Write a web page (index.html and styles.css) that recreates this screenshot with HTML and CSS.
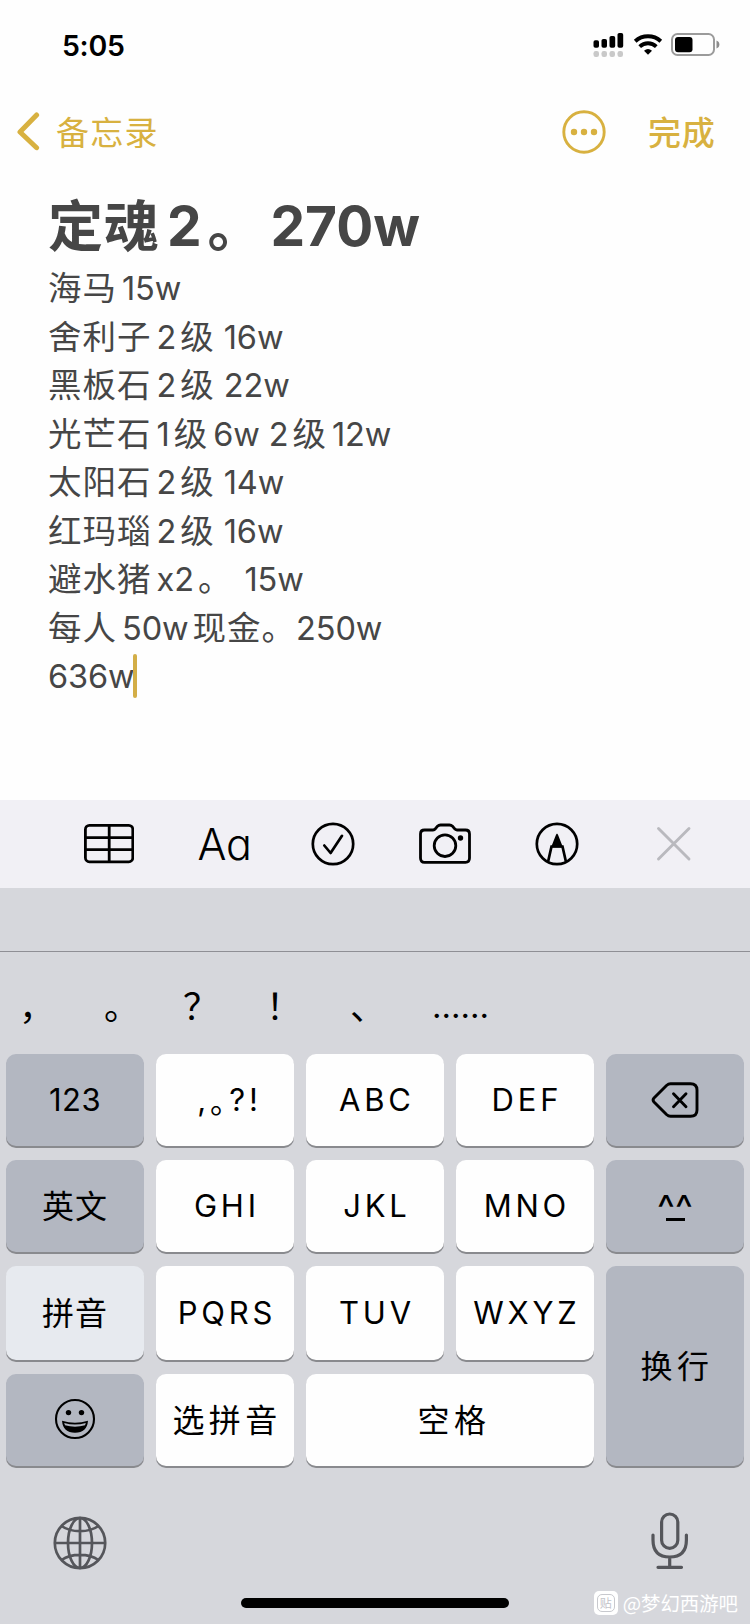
FILE: index.html
```html
<!DOCTYPE html>
<html lang="zh-CN">
<head>
<meta charset="utf-8">
<title>备忘录</title>
<link rel="stylesheet" href="styles.css">
</head>
<body>
<div class="phone">
  <header class="status">
    <span class="time">5:05</span>
    <svg class="status-icons" width="128" height="26" viewBox="0 0 128 26">
      <g fill="#000"><rect x="0.5" y="8.3" width="5.5" height="7.5" rx="1.8"/><rect x="8.5" y="7" width="5.5" height="8.8" rx="1.8"/><rect x="16.5" y="4" width="5.7" height="11.8" rx="1.8"/><rect x="24.5" y="1" width="5.7" height="14.8" rx="1.8"/></g>
      <g fill="#c9c9c9"><rect x="0.5" y="19" width="5.5" height="6" rx="2.2"/><rect x="8.5" y="19" width="5.5" height="6" rx="2.2"/><rect x="16.5" y="19" width="5.5" height="6" rx="2.2"/><rect x="24.5" y="19" width="5.5" height="6" rx="2.2"/></g>
      <path d="M42.2 9.2A19.2 19.2 0 0 1 67.8 9.2" fill="none" stroke="#000" stroke-width="4"/>
      <path d="M46.7 14.6A12 12 0 0 1 63.3 14.6" fill="none" stroke="#000" stroke-width="3.8"/>
      <path d="M51 18.7Q55 15.4 59 18.7L55 22.8Z"/>
      <rect x="79" y="2" width="42" height="21" rx="5.5" fill="none" stroke="#9b9b9b" stroke-width="2"/>
      <rect x="82" y="5" width="17.5" height="15.3" rx="3"/>
      <path d="M123.5 8.5Q126.4 9.6 126.4 12.5T123.5 16.5Z" fill="#8d8d8d"/>
    </svg>
  </header>
  <nav class="nav">
    <svg class="back" width="24" height="40" viewBox="0 0 24 40"><path d="M19.6 3L3 20L19.6 35.7" fill="none" stroke="#d8b140" stroke-width="5" stroke-linecap="round" stroke-linejoin="round"/></svg>
    <span class="nav-title">备忘录</span>
    <svg class="more" width="44" height="44" viewBox="0 0 44 44"><circle cx="22" cy="22" r="20.2" fill="none" stroke="#d8b140" stroke-width="2.9"/><g fill="#d8b140"><circle cx="12" cy="22" r="3.2"/><circle cx="22" cy="22" r="3.2"/><circle cx="32" cy="22" r="3.2"/></g></svg>
    <span class="done">完成</span>
  </nav>
  <main class="note">
    <h1><span class="han">定魂</span><span class="num">2</span><span class="han stop">。</span><span class="num">270w</span></h1>
    <p><span class="han">海马</span><span class="num">15w</span></p>
    <p><span class="han">舍利子</span><span class="num">2</span><span class="han">级</span><span class="num sp">16w</span></p>
    <p><span class="han">黑板石</span><span class="num">2</span><span class="han">级</span><span class="num sp">22w</span></p>
    <p><span class="han">光芒石</span><span class="num">1</span><span class="han">级</span><span class="num">6w</span><span class="num sp">2</span><span class="han">级</span><span class="num">12w</span></p>
    <p><span class="han">太阳石</span><span class="num">2</span><span class="han">级</span><span class="num sp">14w</span></p>
    <p><span class="han">红玛瑙</span><span class="num">2</span><span class="han">级</span><span class="num sp">16w</span></p>
    <p><span class="han">避水猪</span><span class="num">x2</span><span class="han stop">。</span><span class="num wide">15w</span></p>
    <p><span class="han">每人</span><span class="num">50w</span><span class="han">现金。</span><span class="num tight">250w</span></p>
    <p><span class="num">636w</span><i class="caret"></i></p>
  </main>
  <div class="toolbar">
    <svg width="50" height="40" viewBox="0 0 50 40" fill="none" stroke="#000" stroke-width="2.8"><rect x="1.4" y="1.4" width="47.4" height="36.4" rx="4"/><path d="M25.2 1.4V37.8M1.4 13.6H48.8M1.4 25.6H48.8"/></svg>
    <span class="aa">Aa</span>
    <svg width="44" height="44" viewBox="0 0 44 44" fill="none" stroke="#000" stroke-width="2.7" stroke-linecap="round" stroke-linejoin="round"><circle cx="22" cy="22" r="20.2"/><path d="M13.3 23.5L19.6 31L31 13.8"/></svg>
    <svg width="52" height="42" viewBox="0 0 52 42" fill="none" stroke="#000" stroke-width="2.8" stroke-linejoin="round"><path d="M5.5 7H14Q15.5 7 16.5 5.7L18.5 3.2Q19.7 2 21.5 2H30.5Q32.3 2 33.5 3.2L35.5 5.7Q36.5 7 38 7H46.5Q50.5 7 50.5 11V35Q50.5 39.3 46.5 39.3H5.5Q1.5 39.3 1.5 35V11Q1.5 7 5.5 7Z"/><circle cx="26" cy="22.7" r="10.8"/><circle cx="41.5" cy="15" r="2.7" fill="#000" stroke="none"/></svg>
    <svg width="44" height="44" viewBox="0 0 44 44" fill="none" stroke="#000" stroke-width="2.7"><circle cx="22" cy="22" r="20.2"/><path d="M13 40L16.5 24.5H27.5L31 40"/><path d="M22 11.5Q23 12 23.5 14L28 25.5H16L20.5 14Q21 12 22 11.5Z" fill="#000" stroke="none"/></svg>
    <svg class="close" width="36" height="36" viewBox="0 0 36 36" stroke="#b9b9be" stroke-width="2.9" stroke-linecap="round"><path d="M2.5 2.5L33 33M33 2.5L2.5 33"/></svg>
  </div>
  <section class="keyboard">
    <div class="preedit"></div>
    <div class="candidates"><span class="c1">，</span><span class="c2">。</span><span class="c3">？</span><span class="c4">！</span><span class="c5">、</span><span class="c6">……</span></div>
    <div class="keys">
      <span class="key dark n">123</span><span class="key punct"><span>,</span><span class="maru">。</span><span>?!</span></span><span class="key">ABC</span><span class="key">DEF</span>
      <span class="key dark"><svg width="48" height="36" viewBox="0 0 48 36" fill="none" stroke="#000" stroke-width="2.9" stroke-linecap="round" stroke-linejoin="round"><path d="M19.5 1.7H39.5Q46 1.7 46 8V28Q46 34.3 39.5 34.3H19.5Q17.5 34.3 15.5 32.5L3 20Q1.2 18 3 16L15.5 3.5Q17.5 1.7 19.5 1.7Z"/><path d="M22.5 11.8L35 24.7M35 11.8L22.5 24.7"/></svg></span>
      <span class="key dark h">英文</span><span class="key">GHI</span><span class="key">JKL</span><span class="key">MNO</span><span class="key dark face"><span class="eyes">^^</span><span class="mouth"></span></span>
      <span class="key light h">拼音</span><span class="key">PQRS</span><span class="key">TUV</span><span class="key">WXYZ</span><span class="key dark tall wideh">换行</span>
      <span class="key dark emoji"><svg width="42" height="42" viewBox="0 0 42 42"><circle cx="21" cy="21" r="19" fill="none" stroke="#000" stroke-width="2.1"/><circle cx="14.5" cy="14.6" r="2.7"/><circle cx="27.5" cy="14.6" r="2.7"/><path d="M8 22.8Q21 26.5 34 22.8Q33 34.8 21 34.8T8 22.8Z"/><path d="M10.2 24.9Q21 28 31.8 24.9L31 27.3Q21 30.2 11 27.3Z" fill="#b3b7c1"/></svg></span><span class="key wideh">选拼音</span><span class="key space wideh">空格</span>
    </div>
    <div class="bottom">
      <svg class="globe" width="54" height="54" viewBox="0 0 54 54" fill="none" stroke="#55565b" stroke-width="2.7"><circle cx="27" cy="27" r="25.2"/><path d="M27 2V52M2 27H52M8.5 10Q16 15.2 27 15.2T45.5 10M8.5 44Q16 38.8 27 38.8T45.5 44"/><ellipse cx="27" cy="27" rx="12" ry="25"/></svg>
      <svg width="38" height="58" viewBox="0 0 38 58" fill="none" stroke="#55565b" stroke-width="3.2" stroke-linecap="round"><rect x="10.6" y="2" width="16.2" height="34.3" rx="8.1"/><path d="M2 23V28Q2 45 18.7 45T35.4 28V23M18.7 45V55M7 55.3H30.5"/></svg>
    </div>
    <div class="home"></div>
    <div class="mark"><span class="logo"><span class="bubble">贴</span></span><span>@梦幻西游吧</span></div>
  </section>
</div>
</body>
</html>
```
FILE: styles.css
```css
* { box-sizing: border-box; }
body { margin: 0; background: #fefefe; }
.phone { width: 750px; height: 1624px; overflow: hidden; position: relative; display: flex; flex-direction: column; font-family: Inter, "Noto Sans CJK SC", sans-serif; color: #000; }
svg { display: block; flex: none; }
.status { height: 90px; flex: none; display: flex; justify-content: space-between; align-items: flex-start; padding: 32px 29px 0 62px; }
.time { font-size: 28.5px; line-height: 27px; font-weight: 600; letter-spacing: -.3px; }
.nav { height: 84px; flex: none; display: flex; align-items: center; color: #d8b140; padding-left: 17px; }
.nav-title { font-family: "Noto Sans CJK SC", sans-serif; font-size: 33px; letter-spacing: 1.3px; line-height: 48px; margin: -3px 0 0 15px; font-weight: 400; }
.more { margin-left: auto; }
.done { font-family: "Noto Sans CJK SC", sans-serif; font-size: 33px; line-height: 48px; letter-spacing: .8px; font-weight: 500; margin: -3px 0 0 42px; width: 102px; }
.note { height: 626px; flex: none; padding: 17px 0 0 48px; color: #464646; }
.note h1, .note p { margin: 0; display: flex; align-items: baseline; white-space: nowrap; }
.note h1 { font-size: 55px; line-height: 70px; height: 74px; font-weight: 700; }
.note p { font-size: 32.5px; line-height: 48px; height: 48.5px; }
.han { font-family: "Noto Sans CJK SC", sans-serif; letter-spacing: 1px; }
.note h1 .han { line-height: 40px; }
.note p .han { font-size: 33.5px; line-height: 30px; }
.han + .num { margin-left: 5px; }
.num { letter-spacing: -.1px; }
.num + .han { margin-left: 4px; }
.note h1 .han + .num { margin-left: 7px; }
.note h1 .num + .han { margin-left: 6px; }
.num + .sp, .han + .sp { margin-left: 9px; }
.han + .wide { margin-left: 12px; }
.han + .tight { margin-left: 0; }
.caret { width: 4px; height: 44px; border-radius: 2px; background: #d3ae47; align-self: center; margin: -3px 0 0 -2px; }
.toolbar { height: 88px; flex: none; background: #f1f0f5; display: flex; align-items: center; gap: 63.7px; padding: 0 58px 0 84px; }
.aa { width: 50px; display: flex; justify-content: center; padding-left: 4px; font-size: 43px; font-weight: 300; font-feature-settings: "cv11"; line-height: 50px; }
.close { margin-left: auto; }
.keyboard { flex: 1; background: #d6d7dc; position: relative; }
.preedit { height: 64px; border-bottom: 1px solid #8f8f95; }
.candidates { height: 102px; padding-left: 19px; display: grid; grid-template-columns: 85px 79px 83px 84px 82px 100px; font-family: "Noto Sans CJK SC", sans-serif; font-size: 36px; line-height: 104px; }
.c6 { font-family: Inter, sans-serif; font-size: 33px; line-height: 109px; }
.keys { display: grid; grid-template-columns: repeat(5, 138px); grid-template-rows: 92px 92px 94px 92px; gap: 14px 12px; padding: 0 6px; }
.key { background: #fefefe; border-radius: 10px; box-shadow: 0 2px 0 #898a8e; display: flex; align-items: center; justify-content: center; font-size: 31px; letter-spacing: 3.8px; line-height: 40px; padding-left: 3.8px; }
.dark { background: #b3b7c1; padding-left: 0; }
.light { background: #e7eaef; }
.key.n { letter-spacing: .4px; }
.h, .wideh { font-family: "Noto Sans CJK SC", sans-serif; font-size: 32px; font-weight: 400; padding: 0 0 5px; }
.h { letter-spacing: 1px; }
.wideh { letter-spacing: 4.4px; padding-left: 4px; }
.tall { grid-column: 5; grid-row: 3 / 5; }
.space { grid-column: 3 / 5; padding-left: 8px; }
.punct { padding-left: 9px; }
.maru { font-family: "Noto Sans CJK SC", sans-serif; font-feature-settings: "halt"; }
.face { flex-direction: column; }
.eyes { font-size: 38px; letter-spacing: 0; line-height: 32px; height: 26px; }
.mouth { width: 19px; height: 3px; background: #000; }
.emoji { padding-bottom: 2px; }
.bottom { display: flex; justify-content: space-between; align-items: center; padding: 0 61px 0 53px; margin-top: 46px; }
.globe { margin-top: 3px; }
.home { width: 268px; height: 10px; border-radius: 5px; background: #000; position: absolute; left: 241px; bottom: 16px; }
.mark { position: absolute; right: 12px; bottom: 6px; display: flex; align-items: center; gap: 5px; color: #fff; font-family: "Noto Sans CJK SC", sans-serif; font-size: 19.4px; line-height: 30px; }
.logo { width: 24px; height: 24px; border-radius: 5px; background: #fff; color: #c2c3c9; padding: 3px; }
.bubble { display: block; height: 18px; border: 1px solid #c8c9ce; border-radius: 5px; font-size: 12px; line-height: 15px; text-align: center; }
```
